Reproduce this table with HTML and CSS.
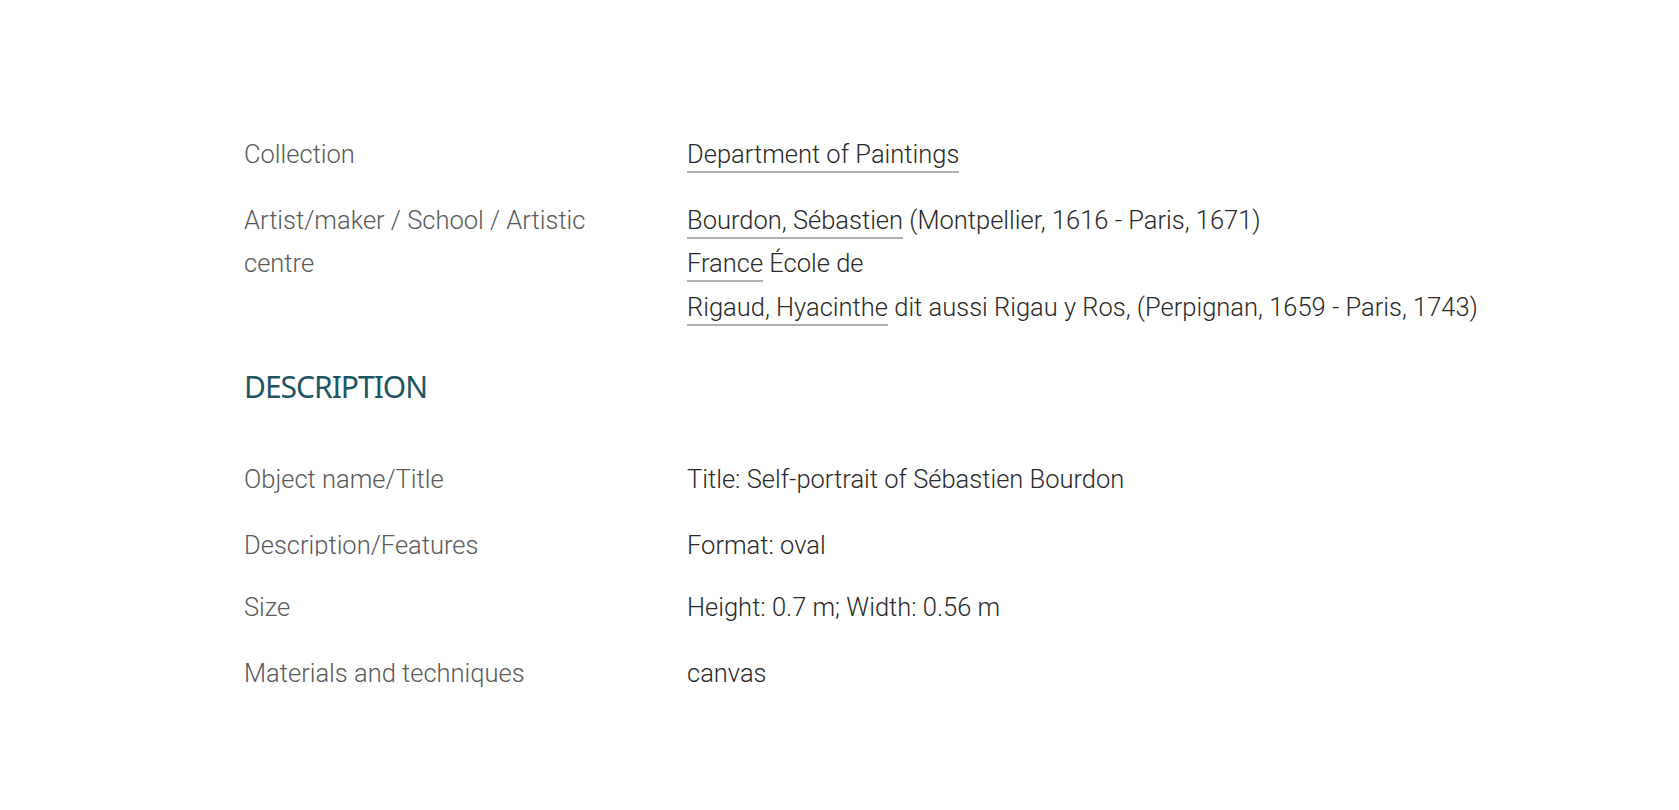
FILE: index.html
```html
<!DOCTYPE html>
<html lang="en">

	<head>
		<meta charset="UTF-8">
		<meta name="viewport" content="width=device-width, initial-scale=1.0">
		<title>Self-portrait of Sébastien Bourdon</title>
		<link rel="stylesheet" href="styles.css">
	</head>

	<body>

		<div class="notice">
			<!-- identification -->
			<div class="row">
				<div class="label">Collection</div>
				<div class="value"><a href="#">Department of Paintings</a></div>
			</div>
			<div class="row">
				<div class="label">Artist/maker / School / Artistic centre</div>
				<div class="value">
					<div><a href="#">Bourdon, Sébastien</a> (Montpellier, 1616 - Paris, 1671)</div>
					<div><a href="#">France</a> École de</div>
					<div><a href="#">Rigaud, Hyacinthe</a> dit aussi Rigau y Ros, (Perpignan, 1659 - Paris, 1743)</div>
				</div>
			</div>

			<h2 class="section-title">DESCRIPTION</h2>

			<div class="row">
				<div class="label">Object name/Title</div>
				<div class="value">Title: Self-portrait of Sébastien Bourdon</div>
			</div>
			<div class="row tight">
				<div class="label clipped">Description/Features</div>
				<div class="value">Format: oval</div>
			</div>
			<div class="row">
				<div class="label">Size</div>
				<div class="value">Height: 0.7 m; Width: 0.56 m</div>
			</div>
			<div class="row">
				<div class="label">Materials and techniques</div>
				<div class="value">canvas</div>
			</div>
		</div>

	</body>

</html>
```

FILE: styles.css
```css
body {
	font-family: Roboto, "Liberation Sans", sans-serif;
	font-weight: 300;
	margin: 0;
	padding: 0;
	background-color: #fff;
}

.notice {
	padding: 133px 0 80px 244px;
	width: 1300px;
}

.row {
	display: flex;
	font-size: 25.5px;
	line-height: 43.5px;
	margin-bottom: 22px;
}

.row.tight {
	margin-bottom: 19px;
}

.label {
	width: 360px;
	margin-right: 83px;
	color: #5a5a5a;
}

.label.clipped {
	/* the descenders get cut off in the original */
	height: 32px;
	overflow: hidden;
}

.value {
	flex: 1;
	color: #2a2a2a;
}

.value a {
	color: #2a2a2a;
	text-decoration: none;
	border-bottom: 2px solid #b0b0b0;
	padding-bottom: 2px;
}

.section-title {
	font-family: "Noto Sans", "Open Sans", sans-serif;
	font-weight: 400;
	font-size: 30px;
	line-height: 40px;
	color: #1d5563;
	margin: 38px 0 51px;
	letter-spacing: -1px;
}
```
